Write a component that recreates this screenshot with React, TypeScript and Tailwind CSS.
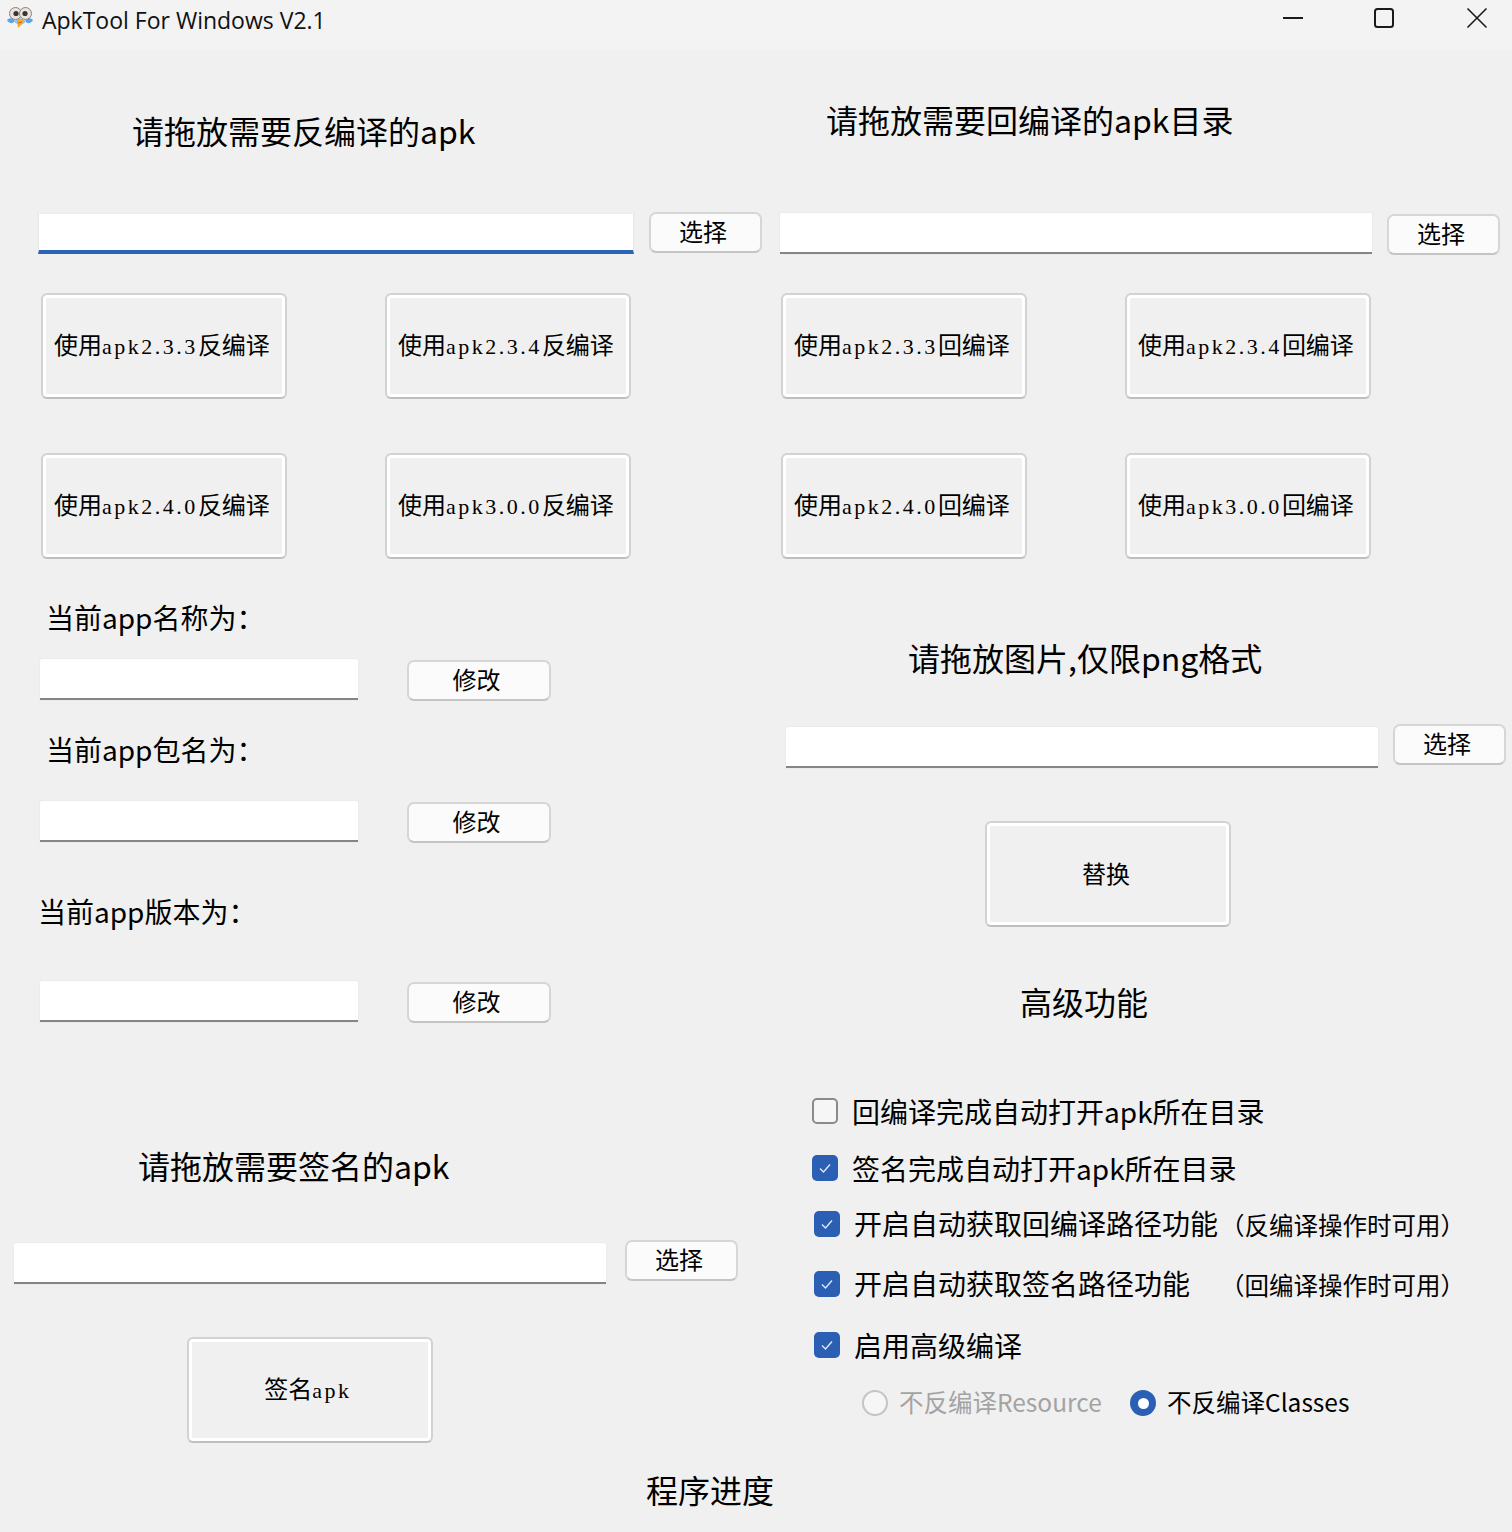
import type { ReactNode } from 'react';

const Latin = ({ children }: { children: ReactNode }) => (
    <span className="font-['Liberation_Serif',serif] text-[22px] tracking-[2.5px]">{children}</span>
);

function BigButton({ head = '使用', ver, tail }: { head?: string; ver?: string; tail?: string }) {
    return (
        <button className="flex h-[106px] w-[246px] shrink-0 items-center justify-center rounded-[6px] border-2 border-[#d2d2d2] border-b-[#bfbfbf] bg-[#f0f0f0] pb-[3px] pr-[4px] text-[24px] leading-none text-black shadow-[inset_0_0_0_3px_#ffffff]">
            {ver ? (
                <span className="whitespace-nowrap">
                    {head}
                    <Latin>{ver}</Latin>
                    {tail}
                </span>
            ) : (
                tail
            )}
        </button>
    );
}

function SmallButton({ label, w, className = '' }: { label: string; w: string; className?: string }) {
    return (
        <button className={`flex h-[41px] shrink-0 items-center justify-center rounded-[7px] border-2 border-[#d6d6d6] border-b-[#c4c4c4] bg-[#fbfbfb] pb-[4px] pr-[5px] text-[24px] leading-none text-black ${w} ${className}`}>
            {label}
        </button>
    );
}

function Field({ w, className = '', focused = false }: { w: string; className?: string; focused?: boolean }) {
    if (focused) {
        return <div className={`h-[41px] shrink-0 border-x border-t border-x-[#e6e6e6] border-t-[#ececec] border-b-[4px] border-b-[#2b63b8] bg-white ${w} ${className}`} />;
    }
    return <div className={`h-[41px] shrink-0 rounded-t-[2px] border-b-2 border-b-[#858585] bg-white shadow-[0_0_0_1px_#ebebeb] ${w} ${className}`} />;
}

const Heading = ({ children, className = '' }: { children: ReactNode; className?: string }) => (
    <div className={`h-[40px] whitespace-nowrap text-[32px] leading-[36px] text-black ${className}`}>{children}</div>
);

const Label = ({ children, className = '' }: { children: ReactNode; className?: string }) => (
    <div className={`h-[40px] whitespace-nowrap text-[28px] leading-[38px] text-black ${className}`}>{children}</div>
);

function CheckBox({ checked }: { checked: boolean }) {
    if (!checked) {
        return <div className="h-[26px] w-[26px] shrink-0 rounded-[5px] border-2 border-[#8a8a8a] bg-[#f6f6f6]" />;
    }
    return (
        <div className="flex h-[26px] w-[26px] shrink-0 items-center justify-center rounded-[5px] bg-[#2a5fb4]">
            <svg width="16" height="16" viewBox="0 0 16 16" fill="none" stroke="#dfe8f6" strokeWidth="1.4">
                <path d="M3 8.5 L6.5 12 L13 4.5" />
            </svg>
        </div>
    );
}

function CheckRow({ checked = true, className, children }: { checked?: boolean; className: string; children: ReactNode }) {
    return (
        <div className={`flex h-[26px] items-center gap-[14px] whitespace-nowrap text-[28px] leading-none text-black ${className}`}>
            <CheckBox checked={checked} />
            <span className="pb-[1px]">{children}</span>
        </div>
    );
}

function BirdIcon() {
    return (
        <svg width="28" height="24" viewBox="0 0 28 24" className="shrink-0">
            <path d="M1 14 C4 11 7 12 9 15 C7 18 3 18 1 14 Z" fill="#55a6ea" />
            <path d="M27 14 C24 11 21 12 19 15 C21 18 25 18 27 14 Z" fill="#55a6ea" />
            <path d="M8 15 C11 20 17 20 20 15 L14 12 Z" fill="#8fc6ee" />
            <circle cx="9.5" cy="7.5" r="6" fill="#e9e4e0" stroke="#8c7f78" strokeWidth="1" />
            <circle cx="19.5" cy="7.5" r="6" fill="#e9e4e0" stroke="#8c7f78" strokeWidth="1" />
            <circle cx="10" cy="7.5" r="2.6" fill="#3a3533" />
            <circle cx="19" cy="7.5" r="2.6" fill="#3a3533" />
            <path d="M11 14 L18 12.5 L16 18 L12 22 Z" fill="#f5a623" />
            <path d="M12 17 L16 16" stroke="#d9601a" strokeWidth="1" />
        </svg>
    );
}

function TitleBar() {
    return (
        <div className="flex h-[50px] items-start bg-[#f3f3f3]">
            <div className="ml-[6px] mt-[6px]">
                <BirdIcon />
            </div>
            <div className="ml-[8px] mt-[3px] font-['Open_Sans',sans-serif] text-[23px] leading-[34px] text-[#111111]">ApkTool For Windows V2.1</div>
            <div className="ml-auto mr-[24px] mt-[7px] flex items-start">
                <svg width="22" height="22" viewBox="0 0 22 22" fill="none" stroke="#1a1a1a" strokeWidth="2">
                    <path d="M1 11 H21" />
                </svg>
                <svg width="22" height="22" viewBox="0 0 22 22" fill="none" stroke="#1a1a1a" strokeWidth="2" className="ml-[69px]">
                    <rect x="2" y="2" width="18" height="18" rx="2.5" />
                </svg>
                <svg width="22" height="22" viewBox="0 0 22 22" fill="none" stroke="#1a1a1a" strokeWidth="1.6" className="ml-[71px]">
                    <path d="M1.5 1.5 L20.5 20.5 M20.5 1.5 L1.5 20.5" />
                </svg>
            </div>
        </div>
    );
}

function LeftColumn() {
    return (
        <div className="flex w-[770px] shrink-0 flex-col">
            <Heading className="ml-[132px] mt-[62px]">请拖放需要反编译的apk</Heading>
            <div className="ml-[38px] mt-[60px] flex items-start">
                <Field w="w-[596px]" focused className="mt-[1px]" />
                <SmallButton label="选择" w="w-[113px]" className="ml-[15px]" />
            </div>
            <div className="ml-[41px] mt-[39px] flex gap-[98px]">
                <BigButton ver="apk2.3.3" tail="反编译" />
                <BigButton ver="apk2.3.4" tail="反编译" />
            </div>
            <div className="ml-[41px] mt-[54px] flex gap-[98px]">
                <BigButton ver="apk2.4.0" tail="反编译" />
                <BigButton ver="apk3.0.0" tail="反编译" />
            </div>
            <Label className="ml-[46px] mt-[39px]">当前app名称为：</Label>
            <div className="ml-[40px] mt-[21px] flex items-start gap-[49px]">
                <Field w="w-[318px]" />
                <SmallButton label="修改" w="w-[144px]" className="mt-[1px]" />
            </div>
            <Label className="ml-[46px] mt-[29px]">当前app包名为：</Label>
            <div className="ml-[40px] mt-[31px] flex items-start gap-[49px]">
                <Field w="w-[318px]" />
                <SmallButton label="修改" w="w-[144px]" className="mt-[1px]" />
            </div>
            <Label className="ml-[38px] mt-[49px]">当前app版本为：</Label>
            <div className="ml-[40px] mt-[49px] flex items-start gap-[49px]">
                <Field w="w-[318px]" />
                <SmallButton label="修改" w="w-[144px]" className="mt-[1px]" />
            </div>
            <Heading className="ml-[138px] mt-[124px]">请拖放需要签名的apk</Heading>
            <div className="ml-[14px] mt-[53px] flex items-start">
                <Field w="w-[592px]" className="mt-[3px]" />
                <SmallButton label="选择" w="w-[113px]" className="ml-[19px]" />
            </div>
            <div className="ml-[187px] mt-[53px]">
                <BigButton head="签名" ver="apk" />
            </div>
        </div>
    );
}

function RightColumn() {
    return (
        <div className="flex flex-1 flex-col">
            <Heading className="ml-[56px] mt-[51px]">请拖放需要回编译的apk目录</Heading>
            <div className="ml-[10px] mt-[72px] flex items-start">
                <Field w="w-[592px]" />
                <SmallButton label="选择" w="w-[113px]" className="ml-[15px] mt-[1px]" />
            </div>
            <div className="ml-[11px] mt-[38px] flex gap-[98px]">
                <BigButton ver="apk2.3.3" tail="回编译" />
                <BigButton ver="apk2.3.4" tail="回编译" />
            </div>
            <div className="ml-[11px] mt-[54px] flex gap-[98px]">
                <BigButton ver="apk2.4.0" tail="回编译" />
                <BigButton ver="apk3.0.0" tail="回编译" />
            </div>
            <Heading className="ml-[138px] mt-[80px]">请拖放图片,仅限png格式</Heading>
            <div className="ml-[16px] mt-[45px] flex items-start">
                <Field w="w-[592px]" className="mt-[3px]" />
                <SmallButton label="选择" w="w-[113px]" className="ml-[15px]" />
            </div>
            <div className="ml-[215px] mt-[53px]">
                <BigButton tail="替换" />
            </div>
            <Heading className="ml-[250px] mt-[56px]">高级功能</Heading>
            <CheckRow checked={false} className="ml-[42px] mt-[75px]">回编译完成自动打开apk所在目录</CheckRow>
            <CheckRow className="ml-[42px] mt-[31px]">签名完成自动打开apk所在目录</CheckRow>
            <CheckRow className="ml-[44px] mt-[30px]">
                开启自动获取回编译路径功能<span className="ml-[2px] text-[24.5px]">（反编译操作时可用）</span>
            </CheckRow>
            <CheckRow className="ml-[44px] mt-[34px]">
                开启自动获取签名路径功能<span className="ml-[30px] text-[24.5px]">（回编译操作时可用）</span>
            </CheckRow>
            <CheckRow className="ml-[44px] mt-[35px]">启用高级编译</CheckRow>
            <div className="ml-[92px] mt-[32px] flex h-[26px] items-center whitespace-nowrap text-[24.5px] leading-none">
                <div className="h-[26px] w-[26px] shrink-0 rounded-full border-2 border-[#c4c4c4] bg-[#f6f6f6]" />
                <span className="ml-[11px] w-[231px] pb-[1px] text-[#a3a3a3]">不反编译Resource</span>
                <div className="flex h-[26px] w-[26px] shrink-0 items-center justify-center rounded-full bg-[#2a5fb4]">
                    <div className="h-[11px] w-[11px] rounded-full bg-white" />
                </div>
                <span className="ml-[11px] pb-[1px] text-black">不反编译Classes</span>
            </div>
        </div>
    );
}

export default function App() {
    return (
        <div className="h-[1532px] w-[1512px] overflow-hidden bg-[#f0f0f0] font-['Noto_Sans_CJK_SC',sans-serif]">
            <TitleBar />
            <div className="flex items-start">
                <LeftColumn />
                <RightColumn />
            </div>
            <Heading className="ml-[646px] mt-[28px]">程序进度</Heading>
        </div>
    );
}
